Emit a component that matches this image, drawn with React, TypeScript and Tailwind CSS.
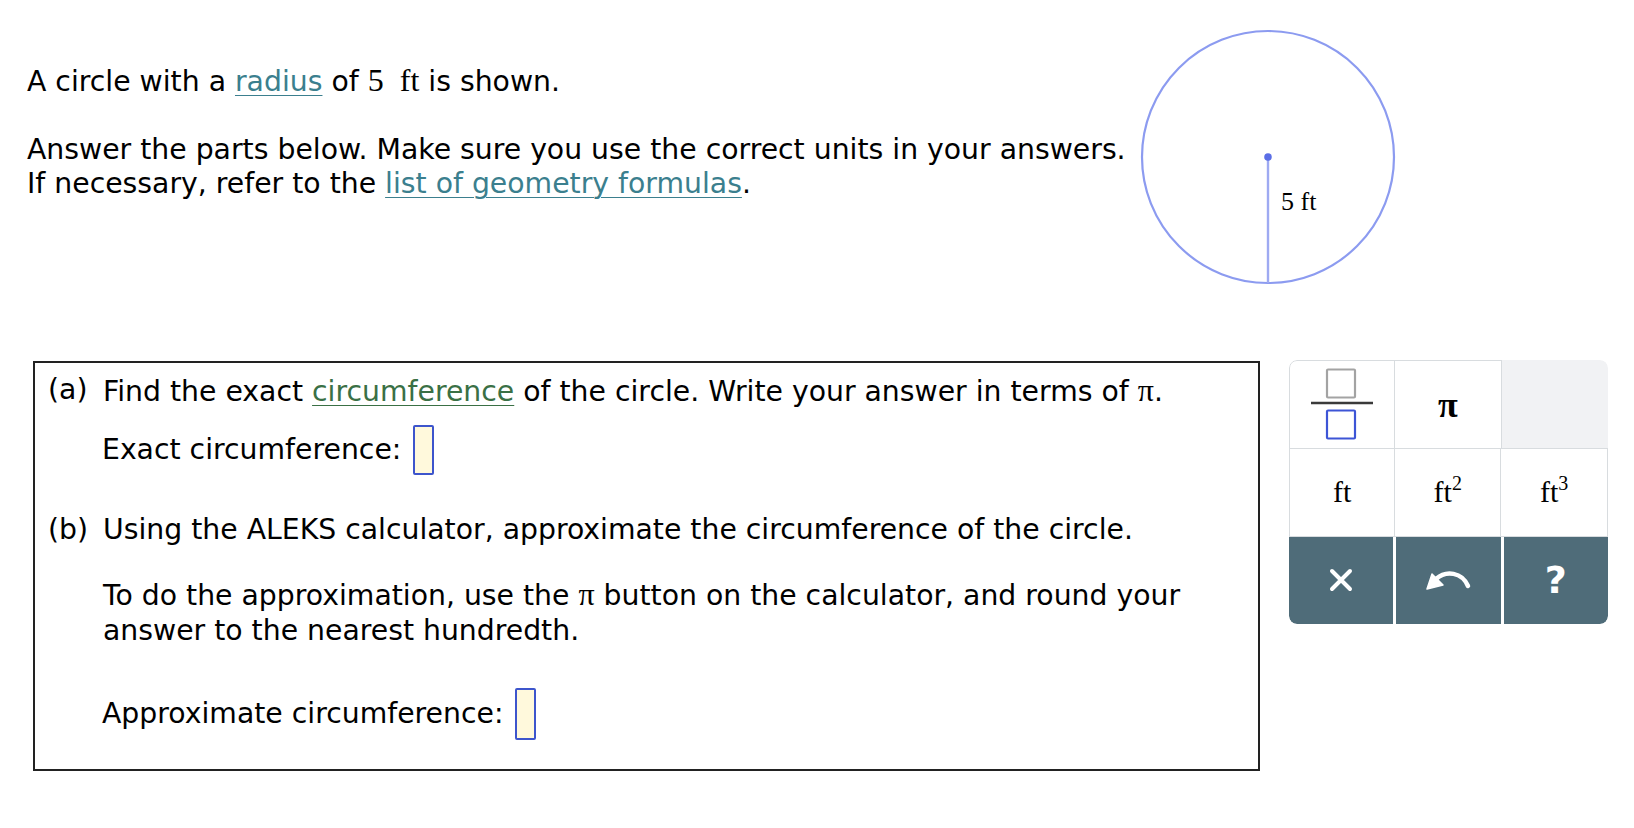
import React from 'react';

const serif = "font-['Liberation_Serif','Times_New_Roman',serif]";

function AnswerBox({ className = '' }: { className?: string }) {
  return (
    <span
      className={`inline-block w-[21px] h-[50px] rounded-[2px] border-2 border-[#3d55cc] bg-[#fff9dc] ${className}`}
    />
  );
}

function FractionIcon() {
  return (
    <svg width="64" height="74" viewBox="0 0 64 74">
      <rect x="17" y="1.5" width="28" height="28" fill="none" stroke="#a3a3a3" strokeWidth="2.2" rx="1" />
      <line x1="1" y1="35" x2="63" y2="35" stroke="#3a3a3a" strokeWidth="2.4" />
      <rect x="17" y="42.5" width="28" height="28" fill="none" stroke="#3d55d6" strokeWidth="2.2" rx="1" />
    </svg>
  );
}

function UndoIcon() {
  return (
    <svg width="48" height="26" viewBox="0 0 48 26">
      <path d="M44 19 C38 5, 22 3, 12 12" fill="none" stroke="#fff" strokeWidth="4.5" strokeLinecap="round" />
      <path d="M3 22 L8 7 L19 18 Z" fill="#fff" stroke="#fff" strokeWidth="1.5" strokeLinejoin="round" />
    </svg>
  );
}

function Unit({ exp }: { exp?: string }) {
  return (
    <span className={`${serif} text-[30px] leading-none`}>
      ft
      {exp && <span className="text-[20px] relative -top-[12px]">{exp}</span>}
    </span>
  );
}

function Keypad() {
  const cell = 'flex items-center justify-center bg-white border-[1.5px] border-[#d8dcdf]';
  return (
    <div className="w-[319px] flex flex-col rounded-lg overflow-hidden">
      <div className="grid grid-cols-3 h-[89px]">
        <div className={`${cell} rounded-tl-lg`}>
          <FractionIcon />
        </div>
        <div className={`${cell} -ml-[1.5px]`}>
          <span className={`${serif} text-[36px] font-bold leading-none`}>π</span>
        </div>
        <div className="bg-[#f1f2f4] rounded-tr-lg" />
      </div>
      <div className="grid grid-cols-3 h-[89px] -mt-[1.5px]">
        <div className={cell}>
          <Unit />
        </div>
        <div className={`${cell} -ml-[1.5px]`}>
          <Unit exp="2" />
        </div>
        <div className={`${cell} -ml-[1.5px]`}>
          <Unit exp="3" />
        </div>
      </div>
      <div className="grid grid-cols-3 gap-[3px] h-[87px] bg-white">
        <div className="flex items-center justify-center bg-[#4f6c79] rounded-bl-lg">
          <svg width="24" height="24" viewBox="0 0 24 24">
            <path d="M3 3 L21 21 M21 3 L3 21" stroke="#fff" strokeWidth="4" strokeLinecap="round" />
          </svg>
        </div>
        <div className="flex items-center justify-center bg-[#4f6c79]">
          <UndoIcon />
        </div>
        <div className="flex items-center justify-center bg-[#4f6c79] rounded-br-lg">
          <span className="text-white text-[38px] font-semibold font-['DejaVu_Sans',sans-serif] leading-none">?</span>
        </div>
      </div>
    </div>
  );
}

export default function App() {
  return (
    <div className="w-[1634px] h-[828px] bg-white text-black font-['DejaVu_Sans','Verdana',sans-serif] text-[28.3px] leading-[34px]">
      <div className="flex">
        <div className="w-[1138px] pl-[27px] pt-[63px]">
          <p>
            A circle with a <a className="text-[#3b7f8e] underline decoration-1 underline-offset-4">radius</a> of{' '}
            <span className={`${serif} text-[32px]`}>5&nbsp;&nbsp;ft</span> is shown.
          </p>
          <p className="mt-[34px]">
            Answer the parts below. Make sure you use the correct units in your answers.
            <br />
            If necessary, refer to the{' '}
            <a className="text-[#3b7f8e] underline decoration-1 underline-offset-4">list of geometry formulas</a>.
          </p>
        </div>
        <svg className="mt-[27px]" width="260" height="260" viewBox="0 0 260 260">
          <circle cx="130" cy="130" r="126" fill="none" stroke="#8c9bf0" strokeWidth="2.2" />
          <line x1="130" y1="130" x2="130" y2="256" stroke="#9eaaf2" strokeWidth="2.4" />
          <circle cx="130" cy="130" r="3.8" fill="#5b6ee6" />
          <text x="143" y="183" fontSize="26" fontFamily="Liberation Serif, Times New Roman, serif" fill="#000">
            5 ft
          </text>
        </svg>
      </div>

      <div className="flex items-start mt-[74px] ml-[33px]">
        <div className="w-[1227px] h-[410px] border-2 border-[#222] pt-[10px] pl-[13px]">
          <div className="flex">
            <span className="w-[55px] shrink-0">(a)</span>
            <span>
              Find the exact{' '}
              <a className="text-[#3a7045] underline decoration-1 underline-offset-4">circumference</a> of the circle. Write
              your answer in terms of <span className={`${serif} text-[32px]`}>π</span>.
            </span>
          </div>
          <div className="flex items-center h-[50px] mt-[16px] ml-[54px]">
            <span>Exact circumference:</span>
            <AnswerBox className="ml-[12px]" />
          </div>

          <div className="flex mt-[38px]">
            <span className="w-[55px] shrink-0">(b)</span>
            <span>Using the ALEKS calculator, approximate the circumference of the circle.</span>
          </div>
          <p className="mt-[30px] ml-[55px] leading-[35px]">
            To do the approximation, use the <span className={`${serif} text-[32px]`}>π</span> button on the calculator, and round your
            <br />
            answer to the nearest hundredth.
          </p>
          <div className="flex items-center h-[52px] mt-[40px] ml-[54px]">
            <span>Approximate circumference:</span>
            <AnswerBox className="ml-[12px] h-[52px]" />
          </div>
        </div>

        <div className="ml-[29px] -mt-[1px]">
          <Keypad />
        </div>
      </div>
    </div>
  );
}
